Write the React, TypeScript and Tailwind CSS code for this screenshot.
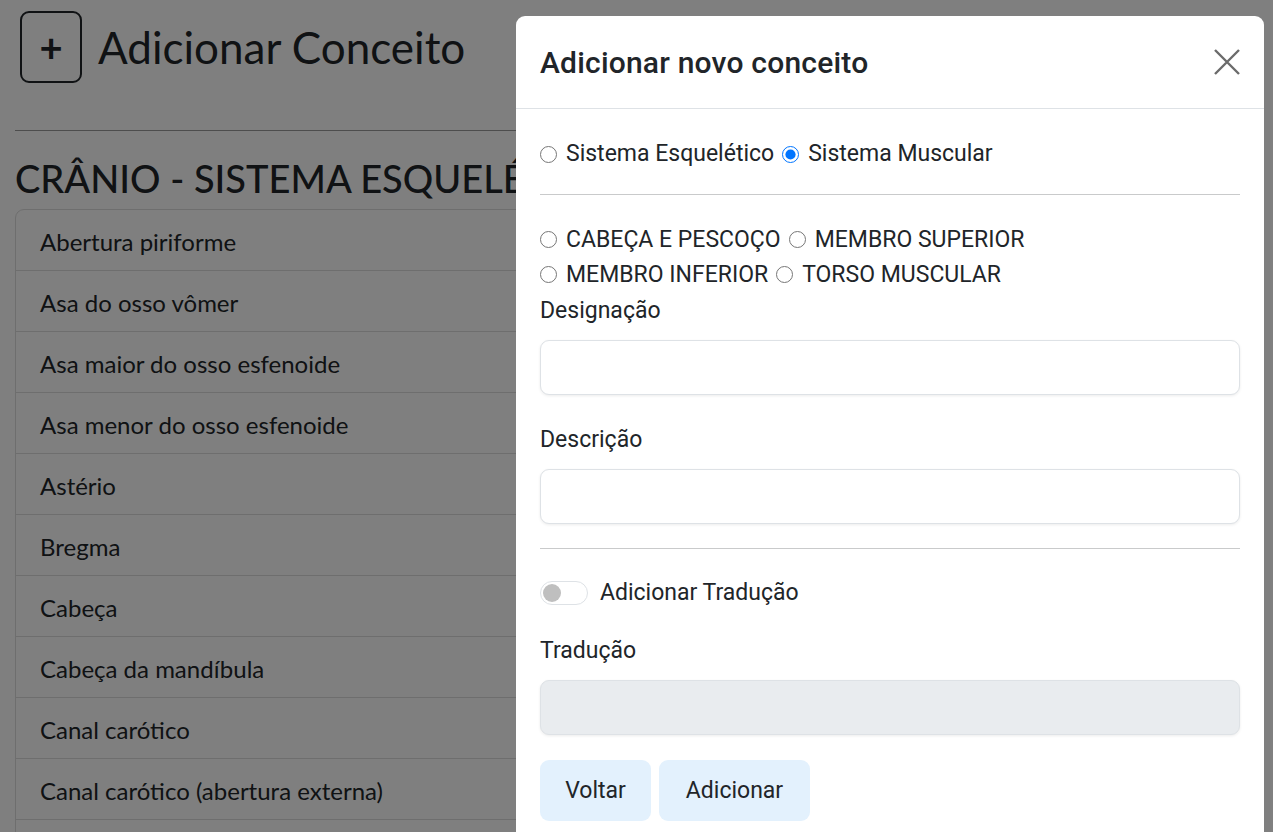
import React from 'react';

const items = [
  'Abertura piriforme',
  'Asa do osso vômer',
  'Asa maior do osso esfenoide',
  'Asa menor do osso esfenoide',
  'Astério',
  'Bregma',
  'Cabeça',
  'Cabeça da mandíbula',
  'Canal carótico',
  'Canal carótico (abertura externa)',
  'Canal do nervo hipoglosso',
];

const Radio: React.FC<{ label: string; checked?: boolean; name: string }> = ({ label, checked, name }) => (
  <label className="inline-flex items-center">
    <input
      type="radio"
      name={name}
      defaultChecked={checked}
      className="w-[17px] h-[17px] m-0 mr-[9px] accent-[#0075ff]"
    />
    <span className="mr-[8px]">{label}</span>
  </label>
);

const Field: React.FC<{ label: string; disabled?: boolean }> = ({ label, disabled }) => (
  <div>
    <div className="leading-[36px]">{label}</div>
    <input
      type="text"
      disabled={disabled}
      className={
        'mt-[11px] block w-full h-[55px] rounded-[9px] border border-[#dee2e6] shadow-[0_1px_3px_rgba(0,0,0,0.08)] outline-none ' +
        (disabled ? 'bg-[#e9ecef]' : 'bg-white')
      }
    />
  </div>
);

const App: React.FC = () => {
  return (
    <div className="relative w-[1273px] h-[832px] overflow-hidden bg-white text-[#212529]" style={{ fontFamily: 'Lato, "Open Sans", sans-serif' }}>
      {/* page behind the modal */}
      <div className="px-[15px] pt-[11px]">
        <div className="flex items-center gap-[16px] pl-[5px]">
          <button className="w-[62px] h-[72px] rounded-[9px] border-2 border-[#212529] flex items-center justify-center text-[40px] font-bold leading-none">
            +
          </button>
          <h1 className="text-[44px] leading-none">Adicionar Conceito</h1>
        </div>
        <hr className="mt-[47px] border-t border-[#9a9a9a]" />
        <h3 className="mt-[25px] text-[38px] leading-[44px] font-medium whitespace-nowrap">CRÂNIO - SISTEMA ESQUELÉTICO</h3>
        <ul className="mt-[9px] border border-[#dcdcdc] rounded-[9px]">
          {items.map((t) => (
            <li key={t} className="h-[61px] flex items-center pt-[3px] px-[24px] text-[24px] border-b border-[#dcdcdc]">
              {t}
            </li>
          ))}
        </ul>
      </div>

      {/* overlay */}
      <div className="absolute inset-0 bg-black/50" />

      {/* modal */}
      <div
        className="absolute left-[516px] top-[16px] w-[748px] h-[840px] bg-white rounded-[9px] text-[23px] text-[#212529]"
        style={{ fontFamily: 'Roboto, "Noto Sans", sans-serif' }}
      >
        <div className="h-[93px] px-[24px] flex items-center justify-between border-b border-[#dee2e6]">
          <h5 className="text-[30px] font-medium leading-none pt-[2px] tracking-[0.2px]">Adicionar novo conceito</h5>
          <svg width="26" height="26" viewBox="0 0 26 26">
            <path d="M1 1 L25 25 M25 1 L1 25" stroke="#6b6b6b" strokeWidth="2.4" />
          </svg>
        </div>
        <div className="px-[24px] pt-[27px]">
          <div className="flex items-center leading-[36px]">
            <Radio name="sys" label="Sistema Esquelético" />
            <Radio name="sys" label="Sistema Muscular" checked />
          </div>
          <hr className="mt-[22px] mb-[27px] border-t border-[#c9cacb]" />
          <div className="leading-[35px]">
            <div className="flex items-center">
              <Radio name="reg" label="CABEÇA E PESCOÇO" />
              <Radio name="reg" label="MEMBRO SUPERIOR" />
            </div>
            <div className="flex items-center">
              <Radio name="reg" label="MEMBRO INFERIOR" />
              <Radio name="reg" label="TORSO MUSCULAR" />
            </div>
          </div>
          <div className="mt-[1px]">
            <Field label="Designação" />
          </div>
          <div className="mt-[27px]">
            <Field label="Descrição" />
          </div>
          <hr className="mt-[24px] border-t border-[#c9cacb]" />
          <div className="mt-[27px] flex items-center">
            <span className="relative w-[48px] h-[24px] rounded-full border border-[#dee2e6]">
              <span className="absolute left-[2px] top-[2px] w-[18px] h-[18px] rounded-full bg-[#bfbfbf]" />
            </span>
            <span className="ml-[12px]">Adicionar Tradução</span>
          </div>
          <div className="mt-[22px]">
            <Field label="Tradução" disabled />
          </div>
          <div className="mt-[25px] flex gap-[8px]">
            <button className="h-[61px] w-[111px] pt-[3px] rounded-[9px] bg-[#e3f1fd]">Voltar</button>
            <button className="h-[61px] w-[151px] pt-[3px] rounded-[9px] bg-[#e3f1fd]">Adicionar</button>
          </div>
        </div>
      </div>
    </div>
  );
};

export default App;
